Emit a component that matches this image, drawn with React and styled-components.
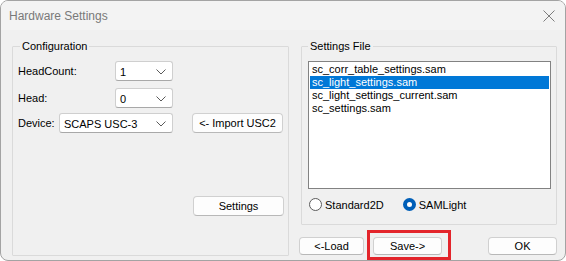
import styled, { createGlobalStyle } from 'styled-components';

const GlobalStyle = createGlobalStyle`
  html, body {
    margin: 0;
    padding: 0;
    background: #ffffff;
  }
  body {
    font-family: "Liberation Sans", Arial, sans-serif;
    font-size: 11px;
    color: #000;
  }
`;

const files = [
  'sc_corr_table_settings.sam',
  'sc_light_settings.sam',
  'sc_light_settings_current.sam',
  'sc_settings.sam',
];

const Chevron = () => (
  <svg width="10" height="6" viewBox="0 0 10 6">
    <path d="M0.5 0.5 L5 5 L9.5 0.5" fill="none" stroke="#5a5a5a" strokeWidth="1" />
  </svg>
);

const Combo = ({ value, width }) => (
  <ComboBox $width={width}>
    <span>{value}</span>
    <Chevron />
  </ComboBox>
);

const App = () => (
  <>
    <GlobalStyle />
    <Window>
      <TitleBar>
        <Title>Hardware Settings</Title>
        <CloseIcon width="12" height="12" viewBox="0 0 12 12">
          <path d="M0.5 0.5 L11.5 11.5 M11.5 0.5 L0.5 11.5" stroke="#7d7d7d" strokeWidth="1" />
        </CloseIcon>
      </TitleBar>
      <Body>
        <ConfigGroup>
          <Legend $offset={2}>Configuration</Legend>
          <Row>
            <Label $width={97}>HeadCount:</Label>
            <Combo value="1" width={58} />
          </Row>
          <Row $mt={7}>
            <Label $width={97}>Head:</Label>
            <Combo value="0" width={58} />
          </Row>
          <Row $mt={5}>
            <Label $width={41}>Device:</Label>
            <Combo value="SCAPS USC-3" width={114} />
            <Button $width={91} $height={20} $ml={19}>&lt;- Import USC2</Button>
          </Row>
          <SettingsRow>
            <Button $width={91} $height={20}>Settings</Button>
          </SettingsRow>
        </ConfigGroup>
        <RightColumn>
          <FileGroup>
            <Legend $offset={0}>Settings File</Legend>
            <ListBox>
              {files.map(name => (
                <ListItem key={name} $selected={name === 'sc_light_settings.sam'}>
                  {name}
                </ListItem>
              ))}
            </ListBox>
            <RadioRow>
              <RadioOption>
                <Radio />
                Standard2D
              </RadioOption>
              <RadioOption>
                <Radio $checked />
                SAMLight
              </RadioOption>
            </RadioRow>
          </FileGroup>
          <ButtonRow>
            <Button $width={69} $height={18}>&lt;-Load</Button>
            <Highlighted>
              <Button $width={69} $height={18}>Save-&gt;</Button>
            </Highlighted>
            <Button $width={73} $height={18} $ml={37}>OK</Button>
          </ButtonRow>
        </RightColumn>
      </Body>
    </Window>
  </>
);

const Window = styled.div`
  width: 566px;
  height: 261px;
  box-sizing: border-box;
  border: 1px solid #a3a3a3;
  border-radius: 8px;
  background: #f0f0f0;
  overflow: hidden;
  display: flex;
  flex-direction: column;
`;

const TitleBar = styled.div`
  height: 29px;
  flex-shrink: 0;
  display: flex;
  align-items: center;
  justify-content: space-between;
  padding: 0 10px 0 8px;
  background: #f3f3f3;
`;

const Title = styled.span`
  font-size: 12px;
  color: #797979;
`;

const CloseIcon = styled.svg`
  display: block;
`;

const Body = styled.div`
  flex: 1;
  display: flex;
  gap: 12px;
  padding: 10px 0 0 11px;
`;

const Group = styled.fieldset`
  margin: 0;
  box-sizing: border-box;
  border: 1px solid #dadada;
  border-radius: 1px;
  display: flex;
  flex-direction: column;
`;

const Legend = styled.legend`
  padding: 0 2px;
  margin-left: ${p => p.$offset}px;
  font-size: 11px;
  line-height: 13px;
`;

const ConfigGroup = styled(Group)`
  width: 277px;
  height: 216px;
  padding: 8px 4px 0 5px;
`;

const Row = styled.div`
  display: flex;
  align-items: center;
  height: 20px;
  margin-top: ${p => p.$mt || 0}px;
`;

const Label = styled.span`
  width: ${p => p.$width}px;
  flex-shrink: 0;
`;

const ComboBox = styled.div`
  width: ${p => p.$width}px;
  height: 20px;
  box-sizing: border-box;
  display: flex;
  align-items: center;
  justify-content: space-between;
  padding: 1px 6px 0 4px;
  background: #fff;
  border: 1px solid #cfcfcf;
  border-bottom-color: #a8a8a8;
  border-radius: 3px;
`;

const Button = styled.div`
  width: ${p => p.$width}px;
  height: ${p => p.$height}px;
  margin-left: ${p => p.$ml || 0}px;
  box-sizing: border-box;
  display: flex;
  align-items: center;
  justify-content: center;
  background: #fdfdfd;
  border: 1px solid #d0d0d0;
  border-bottom-color: #b8b8b8;
  border-radius: 4px;
  font-size: 11px;
`;

const SettingsRow = styled.div`
  display: flex;
  justify-content: flex-end;
  margin-top: 63px;
`;

const RightColumn = styled.div`
  display: flex;
  flex-direction: column;
  width: 256px;
`;

const FileGroup = styled(Group)`
  width: 256px;
  height: 185px;
  padding: 2px 5px 0 6px;
`;

const ListBox = styled.div`
  height: 128px;
  box-sizing: border-box;
  margin-top: 6px;
  background: #fff;
  border: 1px solid #828282;
  padding: 1px;
  display: flex;
  flex-direction: column;
`;

const ListItem = styled.div`
  height: 13px;
  line-height: 13px;
  padding-left: 2px;
  font-size: 11px;
  background: ${p => (p.$selected ? '#0078d7' : 'transparent')};
  color: ${p => (p.$selected ? '#fff' : '#000')};
`;

const RadioRow = styled.div`
  display: flex;
  align-items: center;
  gap: 19px;
  margin-top: 9px;
  margin-left: 1px;
`;

const RadioOption = styled.label`
  display: flex;
  align-items: center;
  gap: 3px;
  font-size: 11px;
`;

const Radio = styled.span`
  width: 13px;
  height: 13px;
  box-sizing: border-box;
  border-radius: 50%;
  border: ${p => (p.$checked ? '4px solid #005fb8' : '1px solid #5c5c5c')};
  background: #fff;
`;

const ButtonRow = styled.div`
  display: flex;
  align-items: center;
  gap: 9px;
  margin-top: 12px;
  margin-left: -2px;
`;

const Highlighted = styled.div`
  position: relative;

  &::after {
    content: '';
    position: absolute;
    top: -7px;
    left: -6px;
    right: -9px;
    bottom: -5px;
    border: 3px solid #e3252b;
    pointer-events: none;
  }
`;

export default App;
